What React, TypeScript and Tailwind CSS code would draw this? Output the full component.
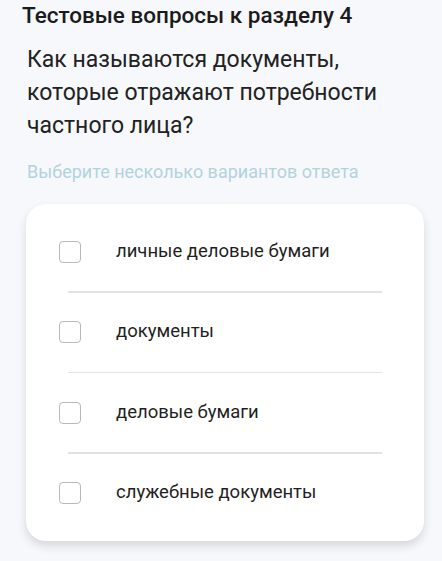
import React from "react";

const options = [
  "личные деловые бумаги",
  "документы",
  "деловые бумаги",
  "служебные документы",
];

export default function App() {
  return (
    <div
      className="w-[442px] h-[561px] bg-[#f6f8fb] overflow-hidden"
      style={{ fontFamily: "Roboto, 'Liberation Sans', sans-serif" }}
    >
      <div className="pl-[22px] pt-[1px] text-[22.5px] leading-[28px] font-medium text-[#1b1b1b]">
        Тестовые вопросы к разделу 4
      </div>
      <div className="pl-[27px] pr-[10px] pt-[14px] text-[23px] leading-[33px] text-[#222222]">
        Как называются документы,
        <br />
        которые отражают потребности
        <br />
        частного лица?
      </div>
      <div className="pl-[27px] pt-[19px] text-[18px] leading-[22px] text-[#b2d3de]">
        Выберите несколько вариантов ответа
      </div>
      <div className="mx-[26px] mt-[21px] w-[398px] h-[337px] bg-white rounded-[20px] shadow-[0_5px_10px_rgba(0,0,0,0.13)] pt-[8px]">
        {options.map((o, i) => (
          <div key={o}>
            {i > 0 && <div className="mx-[42px] h-[1.5px] bg-[#e2e2e2]" />}
            <div className="h-[79px] flex items-center pl-[33px]">
              <div className="w-[22px] h-[22px] rounded-[4px] border border-[#b9b9b9] shrink-0" />
              <div className="ml-[35px] text-[18.5px] text-[#1f1f1f]">
                {o}
              </div>
            </div>
          </div>
        ))}
      </div>
    </div>
  );
}
